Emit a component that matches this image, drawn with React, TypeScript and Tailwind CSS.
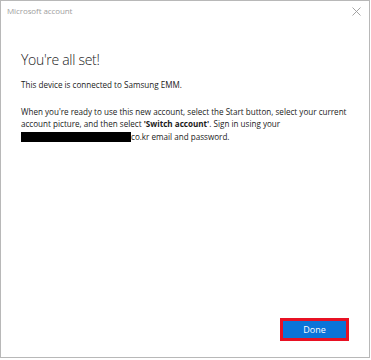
import React from "react";

export default function App() {
  return (
    <div className="w-[371px] h-[360px] bg-white" style={{ fontFamily: '"Open Sans", "Noto Sans", sans-serif' }}>
      <div className="w-[370px] h-[358px] border border-[#b8b8b8] flex flex-col">
        <div className="h-[19px] flex items-center justify-between pl-[6px] pr-[8px]">
          <span className="text-[8px] text-[#a0a0a0] tracking-[-0.1px]">Microsoft account</span>
          <svg width="9" height="9" viewBox="0 0 9 9" className="mt-[1px]">
            <path d="M0.5 0.5 L8.5 8.5 M8.5 0.5 L0.5 8.5" stroke="#9a9a9a" strokeWidth="0.9" />
          </svg>
        </div>
        <div className="flex-1 flex flex-col px-[20px]">
          <h1 className="mt-[31px] text-[14px] font-light text-[#1a1a1a] tracking-[-0.3px] leading-[18px]">You're all set!</h1>
          <p className="mt-[10px] text-[8.1px] text-[#1a1a1a] leading-[12.5px]">This device is connected to Samsung EMM.</p>
          <p className="mt-[14px] text-[8.1px] text-[#1a1a1a] leading-[12.5px] pr-[2px]">
            When you're ready to use this new account, select the Start button, select your current account picture, and then select <span className="font-bold">'Switch account'</span>. Sign in using your
            <br />
            <span className="inline-block w-[110px] h-[10px] bg-black align-[-2px]"></span>co.kr email and password.
          </p>
          <div className="flex-1" />
          <div className="flex justify-end mb-[16px]">
            <button className="w-[69px] h-[23px] border-[3px] border-[#e81123] bg-[#0a74d8] text-white text-[9px] flex items-center justify-center">
              Done
            </button>
          </div>
        </div>
      </div>
    </div>
  );
}
